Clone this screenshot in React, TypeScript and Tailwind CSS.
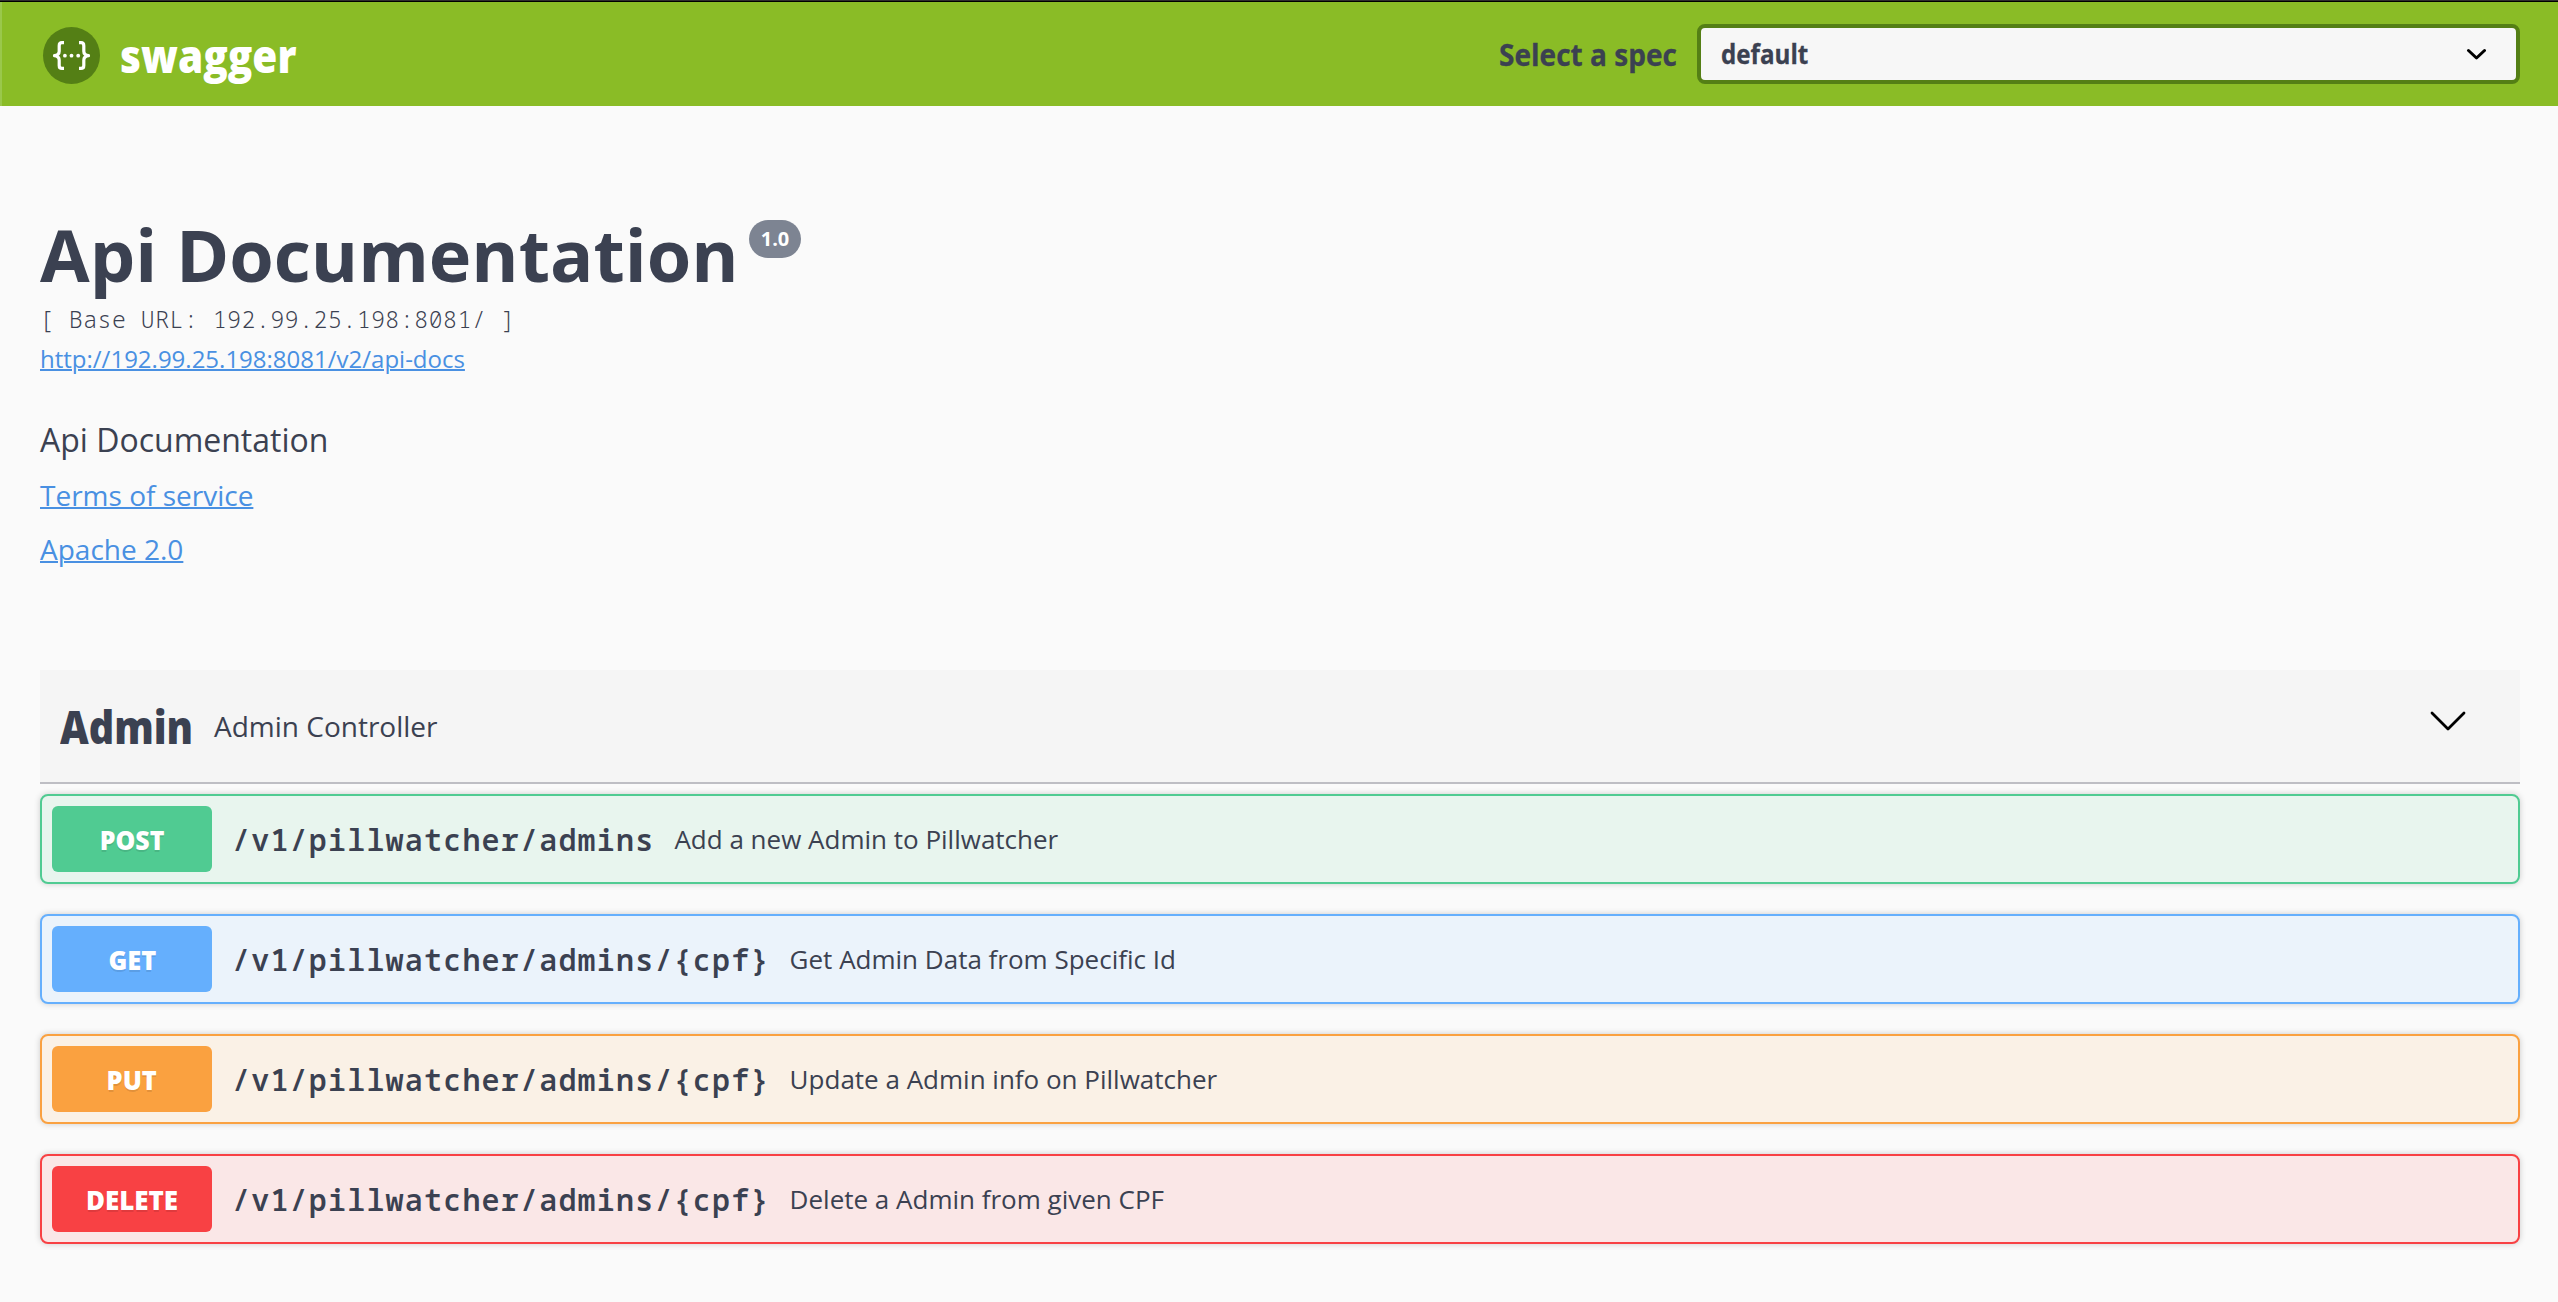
import type { ReactNode } from 'react';

type Endpoint = {
  method: string;
  path: string;
  summary: string;
  box: string;
  button: string;
  label: string;
};

const endpoints: Endpoint[] = [
  {
    method: 'POST',
    path: '/v1/pillwatcher/admins',
    summary: 'Add a new Admin to Pillwatcher',
    box: 'border-[#50cb92] bg-[#e8f5ee]',
    button: 'bg-[#50cb92]',
    label: 'scale-x-[0.92]',
  },
  {
    method: 'GET',
    path: '/v1/pillwatcher/admins/{cpf}',
    summary: 'Get Admin Data from Specific Id',
    box: 'border-[#65affd] bg-[#ebf3fb]',
    button: 'bg-[#65affd]',
    label: 'scale-x-[0.94]',
  },
  {
    method: 'PUT',
    path: '/v1/pillwatcher/admins/{cpf}',
    summary: 'Update a Admin info on Pillwatcher',
    box: 'border-[#faa140] bg-[#faf1e6]',
    button: 'bg-[#faa140]',
    label: 'scale-x-[0.94]',
  },
  {
    method: 'DELETE',
    path: '/v1/pillwatcher/admins/{cpf}',
    summary: 'Delete a Admin from given CPF',
    box: 'border-[#f84144] bg-[#fae7e7]',
    button: 'bg-[#f84144]',
    label: 'scale-x-[0.96]',
  },
];

function Logo() {
  return (
    <svg width="60" height="60" viewBox="0 0 60 60" className="shrink-0">
      <circle cx="31.5" cy="31.5" r="28.5" fill="#547f15" />
      <g fill="none" stroke="#fff" strokeWidth="3.2" strokeLinejoin="round">
        <path d="M24 18.7h-2q-2.8 0-2.8 3v5.5q0 3.8-4.7 4.5q4.7.7 4.7 4.5v5.2q0 3 2.8 3H24" />
        <path d="M39 18.7h2q2.8 0 2.8 3v5.5q0 3.8 4.7 4.5q-4.7.7-4.7 4.5v5.2q0 3-2.8 3H39" />
      </g>
      <g fill="#fff">
        <circle cx="24.9" cy="31.7" r="1.9" />
        <circle cx="31.5" cy="31.7" r="1.9" />
        <circle cx="38.2" cy="31.7" r="1.9" />
      </g>
    </svg>
  );
}

function Link({ children }: { children: ReactNode }) {
  return (
    <a href="#" className="text-[#4990e2] underline decoration-2">
      {children}
    </a>
  );
}

function Topbar() {
  return (
    <header className="flex h-[105px] items-center justify-between border-t border-black bg-[#8abc26] pr-[38px] pl-10 shadow-[inset_2px_0_0_#9ac84b]">
      <div className="flex items-center">
        <Logo />
        <span className="mt-0.5 ml-5 inline-block origin-left scale-x-[0.882] text-[46px] leading-none font-extrabold text-white">
          swagger
        </span>
      </div>
      <div className="flex items-center">
        <div className="mt-1 w-[198px]">
          <span className="inline-block origin-left scale-x-[0.935] text-[30px] leading-none font-bold whitespace-nowrap [-webkit-text-stroke:0.3px_#3b4151]">
            Select a spec
          </span>
        </div>
        <div className="flex h-[60px] w-[823px] items-center justify-between rounded-lg border-4 border-[#547f15] bg-[#f7f7f7] pr-[30px] pl-4">
          <span className="ml-1 inline-block origin-left scale-x-[0.93] text-[26px] leading-none font-bold [-webkit-text-stroke:0.3px_#3b4151]">default</span>
          <svg width="20" height="14" viewBox="0 0 20 14" fill="none" stroke="#000" strokeWidth="3" strokeLinecap="round" strokeLinejoin="round">
            <path d="M2.5 3.5 10.5 11 18.5 3.5" />
          </svg>
        </div>
      </div>
    </header>
  );
}

function Operation({ method, path, summary, box, button, label }: Endpoint) {
  return (
    <div className={`flex h-[90px] items-center rounded-lg border-2 pl-2.5 shadow-[0_0_6px_rgba(0,0,0,0.19)] ${box}`}>
      <div className={`flex h-[66px] w-40 items-center justify-center rounded-md ${button}`}>
        <span className={`mt-0.5 inline-block text-[27px] font-extrabold text-white [text-shadow:0_2px_0_rgba(0,0,0,0.1)] ${label}`}>{method}</span>
      </div>
      <span className="ml-5 font-['Noto_Sans_Mono','DejaVu_Sans_Mono',monospace] text-[30px] font-semibold tracking-[1.2px]">{path}</span>
      <span className="ml-5 text-[26px]">{summary}</span>
    </div>
  );
}

export default function App() {
  return (
    <div className="h-[1302px] w-full overflow-hidden border-t border-[#2e2e2e] bg-[#fafafa] font-['Open_Sans','Noto_Sans',sans-serif] text-[#3b4151]">
      <Topbar />
      <main className="pr-[38px] pl-10">
        <div className="flex items-start pt-[108px]">
          <h1 className="w-[696px] text-[72px] leading-[80px] font-bold whitespace-nowrap">Api Documentation</h1>
          <span className="mt-1.5 ml-[13px] flex h-[38px] w-[52px] items-center justify-center rounded-full bg-[#7d8492] text-[20px] font-bold text-white">
            1.0
          </span>
        </div>
        <p className="mt-[5px] font-['Noto_Sans_Mono','DejaVu_Sans_Mono',monospace] text-[23px] leading-10 font-light tracking-[0.6px]">
          [ Base URL: 192.99.25.198:8081/ ]
        </p>
        <p className="text-[24px] leading-[39px]">
          <Link>http://192.99.25.198:8081/v2/api-docs</Link>
        </p>
        <p className="mt-[37px] text-[32px] leading-[50px]">Api Documentation</p>
        <p className="mt-[3px] text-[28px] leading-[54px]">
          <Link>Terms of service</Link>
        </p>
        <p className="text-[28px] leading-[54px]">
          <Link>Apache 2.0</Link>
        </p>
        <section className="mt-[94px]">
          <div className="flex h-[114px] items-center border-b-2 border-[#bebec4] bg-[#f5f5f5] pr-[54px] pl-5">
            <h2 className="w-[154px] text-[46px] leading-none font-extrabold">
              <span className="inline-block origin-left scale-x-[0.86]">Admin</span>
            </h2>
            <p className="grow text-[28px] leading-none">Admin Controller</p>
            <svg width="36" height="22" viewBox="0 0 36 22" className="mb-2.5" fill="none" stroke="#000" strokeWidth="2.8" strokeLinecap="round" strokeLinejoin="round">
              <path d="M2 3 18 19 34 3" />
            </svg>
          </div>
          <div className="mt-2.5 flex flex-col gap-[30px]">
            {endpoints.map((e) => (
              <Operation key={e.method} {...e} />
            ))}
          </div>
        </section>
      </main>
    </div>
  );
}
